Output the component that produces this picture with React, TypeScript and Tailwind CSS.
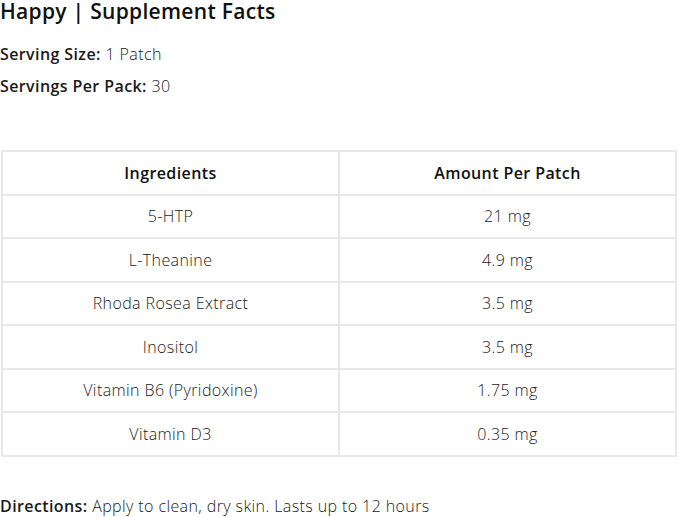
import React from 'react';

interface Row {
  name: string;
  amount: string;
}

const rows: Row[] = [
  { name: '5-HTP', amount: '21 mg' },
  { name: 'L-Theanine', amount: '4.9 mg' },
  { name: 'Rhoda Rosea Extract', amount: '3.5 mg' },
  { name: 'Inositol', amount: '3.5 mg' },
  { name: 'Vitamin B6 (Pyridoxine)', amount: '1.75 mg' },
  { name: 'Vitamin D3', amount: '0.35 mg' },
];

export default function App() {
  return (
    <div className="w-[679px] h-[517px] bg-white text-[#1a1a1a] font-['Open_Sans',sans-serif] overflow-hidden tracking-[0.4px]">
      <h2 className="text-[21px] leading-[22px] font-semibold text-[#111] tracking-[0.3px]">Happy | Supplement Facts</h2>

      <div className="mt-[22px] flex flex-col gap-[12px] text-[16px] leading-[20px]">
        <p>
          <span className="font-semibold">Serving Size:</span> <span className="font-light">1 Patch</span>
        </p>
        <p>
          <span className="font-semibold">Servings Per Pack:</span> <span className="font-light">30</span>
        </p>
      </div>

      <table className="mt-[54px] ml-[1px] w-[676px] border-collapse border-2 border-[#e8e8e8] text-[16px] table-fixed">
        <thead>
          <tr className="h-[43.5px]">
            <th className="border-2 border-[#e8e8e8] font-semibold text-[#111]">Ingredients</th>
            <th className="border-2 border-[#e8e8e8] font-semibold text-[#111]">Amount Per Patch</th>
          </tr>
        </thead>
        <tbody>
          {rows.map((r) => (
            <tr key={r.name} className="h-[43.5px]">
              <td className="border-2 border-[#e8e8e8] text-center font-light">{r.name}</td>
              <td className="border-2 border-[#e8e8e8] text-center font-light">{r.amount}</td>
            </tr>
          ))}
        </tbody>
      </table>

      <p className="mt-[39px] text-[16px] leading-[20px]">
        <span className="font-semibold">Directions:</span>{' '}
        <span className="font-light">Apply to clean, dry skin. Lasts up to 12 hours</span>
      </p>
    </div>
  );
}
